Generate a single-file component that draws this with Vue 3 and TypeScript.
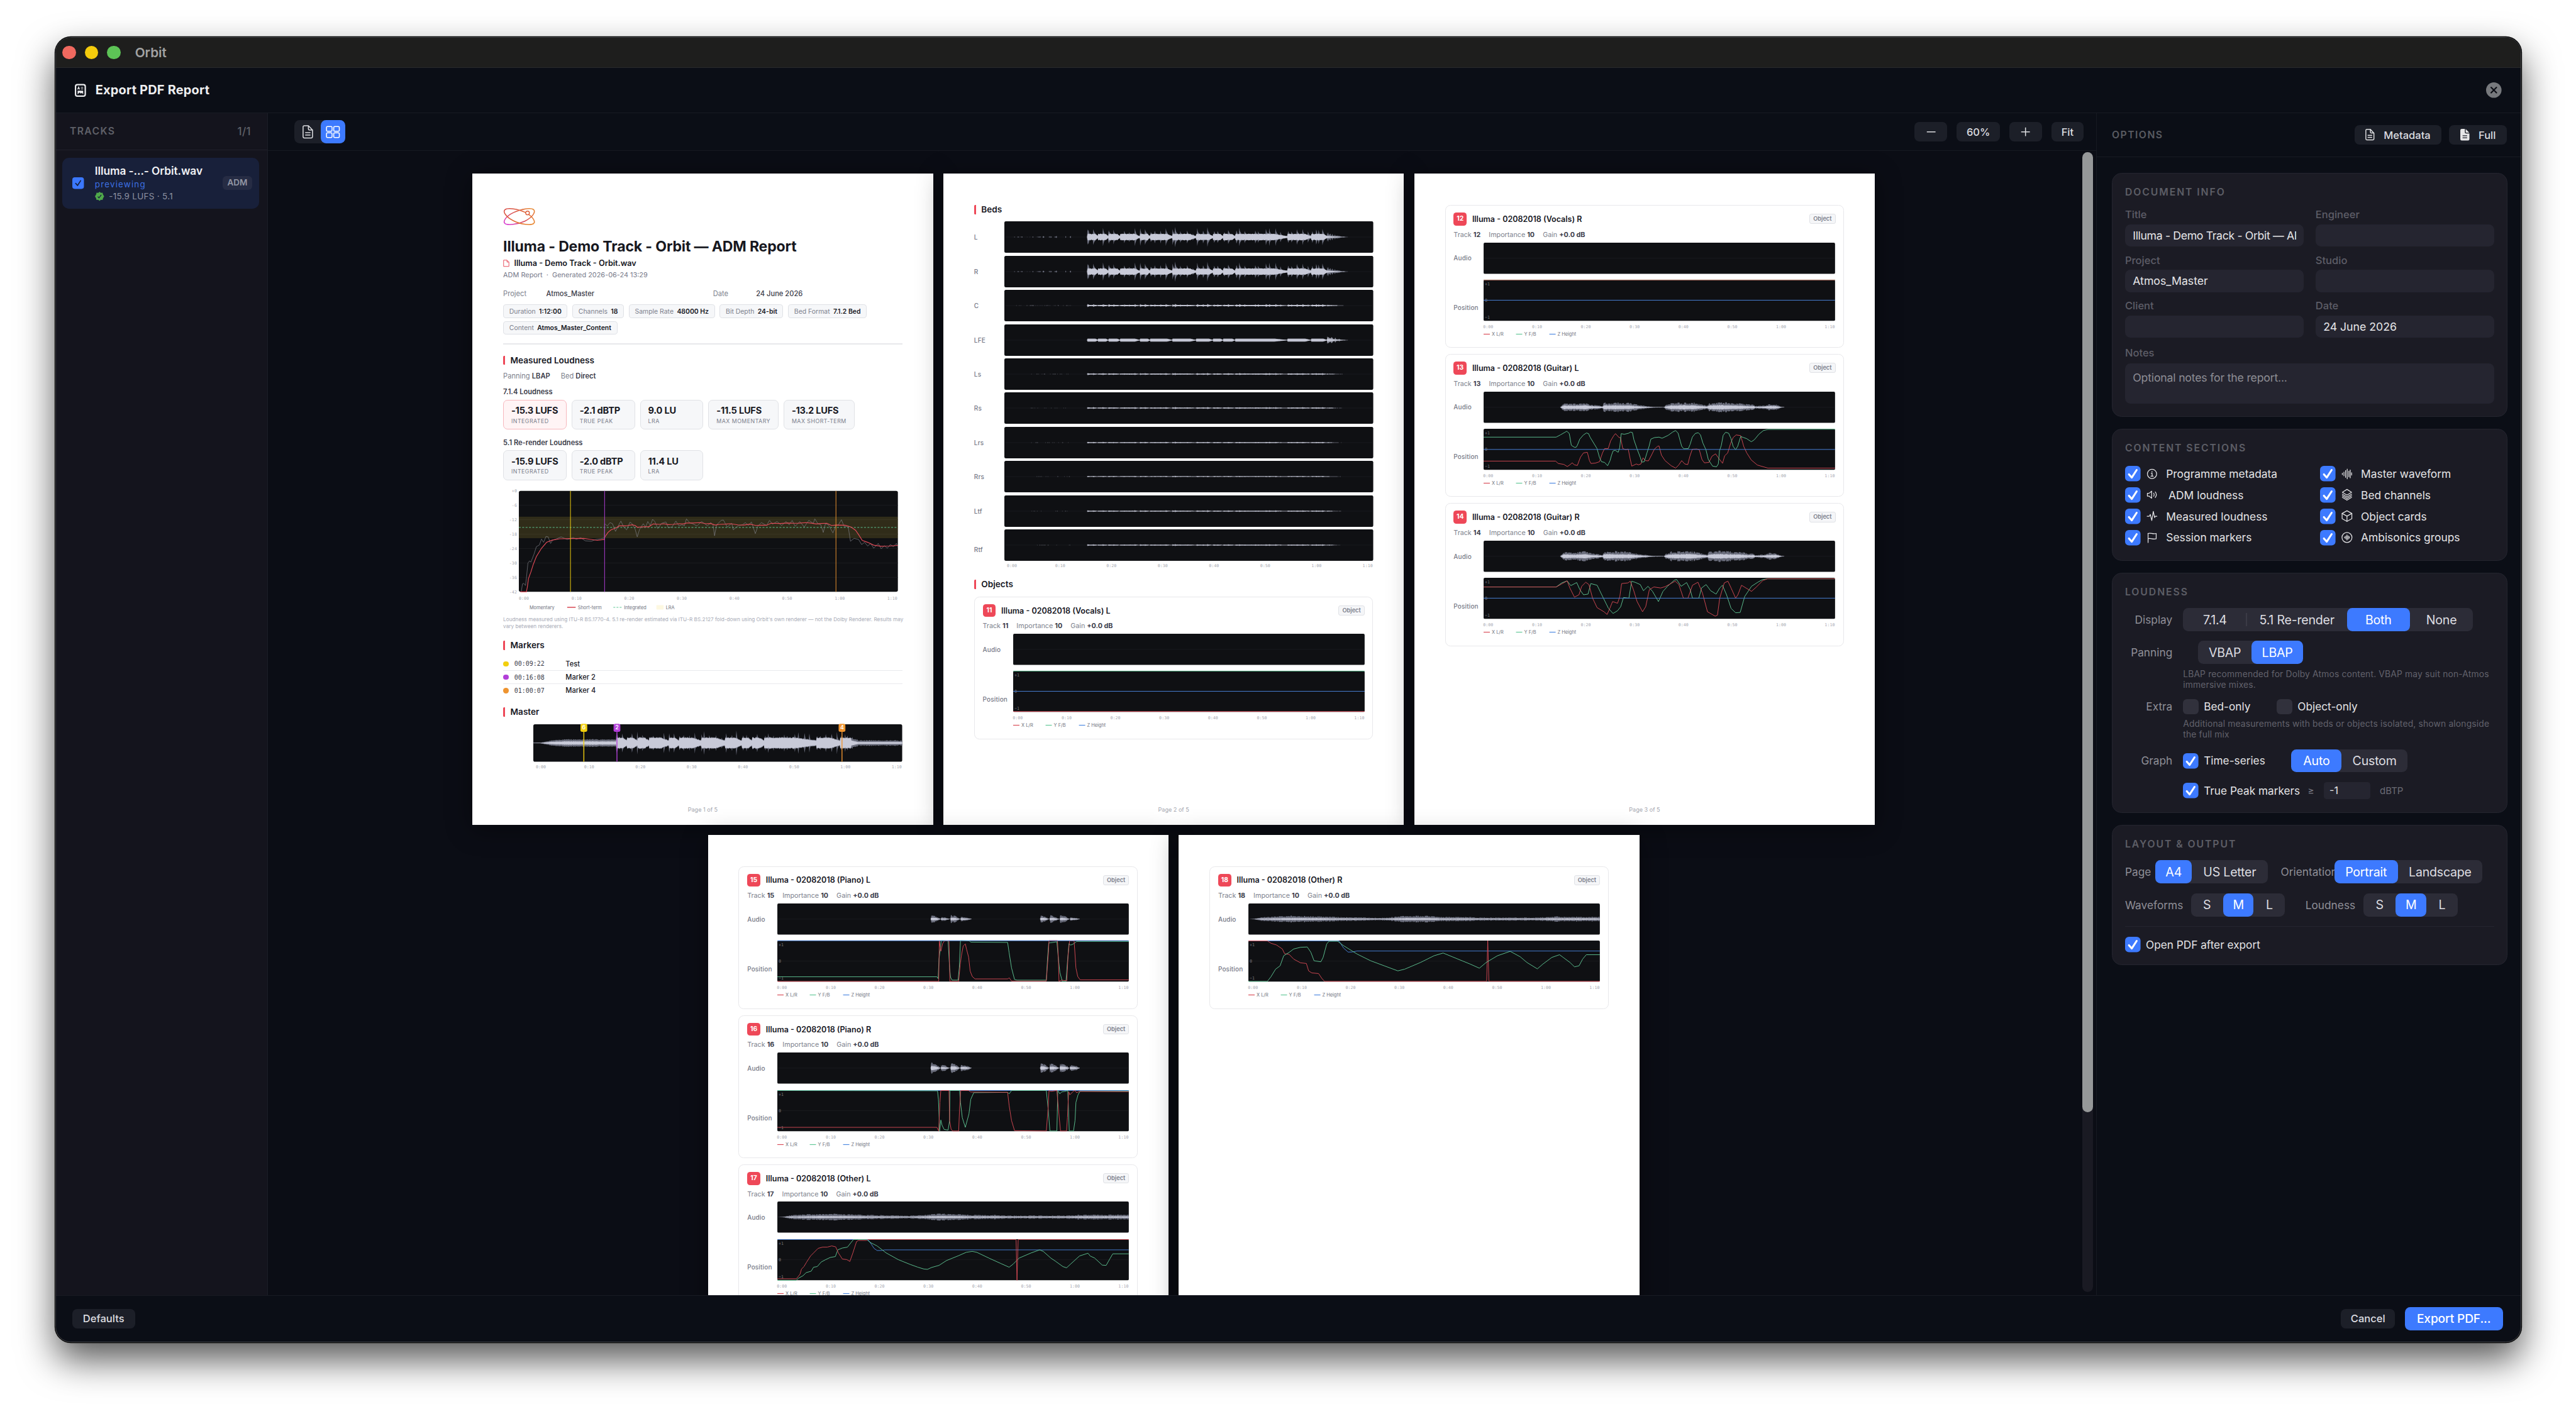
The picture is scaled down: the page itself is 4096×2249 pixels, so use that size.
<script setup lang="ts">
type Series = { color: string; points: string }
type ObjectCard = {
  id: number
  name: string
  wave: string
  grid: [number, number]
  series: Series[]
}

const RED = '#d84a55'
const GREEN = '#5fc795'
const BLUE = '#4a86e0'

/* ---------- icons (24 x 24 stroke paths) ---------- */
const icons: Record<string, string[]> = {
  info: ['M12 2a10 10 0 1 0 0 20a10 10 0 1 0 0-20z', 'M10.2 10.6h2.1v6.2', 'M9.6 16.9h5', 'M12 6.6v1.5'],
  speaker: ['M2 9v6h3.6l5.600 4.600V4.400L5.600 9z', 'M15.600 8.600c1.300 2 1.300 4.800 0 6.800', 'M19 6c2.800 3.600 2.800 8.400 0 12'],
  pulse: ['M1.500 12.500h4.500l2.300-4 3.200 13 3.300-19.500 2.800 13 1.600-2.500h3.300'],
  flag: ['M3.500 23V3.200', 'M3.500 3.400c5-2.400 10 2.400 17.500 0v11.400c-7.500 2.400-12.500-2.400-17.500 0'],
  wave: ['M2 10.500v3', 'M5.500 8v8', 'M9 4.500v15', 'M12.500 1.500v21', 'M16 6v12', 'M19 3.500v17', 'M22 9.500v5'],
  layers: ['M12 0.500l10 6.200-10 6.200-10-6.200z', 'M2 10.800l10 6.200 10-6.200', 'M2 14.200l10 6.200 10-6.200', 'M2 17.600l10 6.200 10-6.200'],
  cube: ['M12 0.500l10.500 5.800v11.400L12 23.500l-10.500-5.800V6.300z', 'M1.500 6.300L12 12l10.500-5.700', 'M12 12v11.500'],
  ambi: ['M12 1.200a10.800 10.800 0 1 0 0 21.600a10.800 10.800 0 1 0 0-21.600z', 'M7 10.800v2.400', 'M9.500 9v6', 'M12 6.500v11', 'M14.500 8.500v7', 'M17 10.500v3'],
}

const leftSections = [
  { icon: 'info', label: 'Programme metadata' },
  { icon: 'speaker', label: 'ADM loudness' },
  { icon: 'pulse', label: 'Measured loudness' },
  { icon: 'flag', label: 'Session markers' },
]
const rightSections = [
  { icon: 'wave', label: 'Master waveform' },
  { icon: 'layers', label: 'Bed channels' },
  { icon: 'cube', label: 'Object cards' },
  { icon: 'ambi', label: 'Ambisonics groups' },
]
const sectionColumns = [leftSections, rightSections]

/* ---------- waveform generation ---------- */
function rng(seed: number) {
  let s = seed
  return () => {
    s = (s * 1664525 + 1013904223) % 4294967296
    return s / 4294967296
  }
}

type Level = { peak: number; rms: number }

function mirror(values: number[], mid: number): string {
  let top = `M0 ${mid}`
  let bottom = ''
  values.forEach((v, i) => {
    top += `L${i} ${(mid - v).toFixed(1)}`
    bottom = `L${i} ${(mid + v).toFixed(1)}` + bottom
  })
  return top + bottom + 'Z'
}

function buildWave(width: number, height: number, level: (t: number, rand: () => number) => Level, seed = 7) {
  const rand = rng(seed)
  const peaks: number[] = []
  const rms: number[] = []
  for (let i = 0; i <= width; i++) {
    const l = level(i / width, rand)
    peaks.push((l.peak * height) / 2)
    rms.push((l.rms * height) / 2)
  }
  return { peak: mirror(peaks, height / 2), rms: mirror(rms, height / 2) }
}

function lerpTable(table: number[][], t: number): number {
  for (let i = 1; i < table.length; i++) {
    if (t <= table[i][0]) {
      const [x0, y0] = table[i - 1]
      const [x1, y1] = table[i]
      return y0 + ((y1 - y0) * (t - x0)) / (x1 - x0 || 1)
    }
  }
  return table[table.length - 1][1]
}

const hits = [
  275, 278, 293, 326, 343, 361, 395, 411, 431, 449, 464, 483, 496, 516, 533, 556, 564, 581, 603, 622, 637, 656, 671, 693,
  704, 726, 739, 766, 776, 794, 829, 839, 864, 876, 896, 913, 937, 949, 966, 986, 1003, 1017, 1031, 1039, 1051,
].map((h, i) => ({ at: h / 1220, amp: [0.54, 0.46, 0.68, 0.58, 0.72, 0.5][(i * 7) % 6] }))
const blocks = [275, 310, 344, 383, 448, 482, 556, 634, 690, 723, 763, 936, 1014, 1068].map((b) => b / 1220)

function hitLevel(t: number, decay: number): number {
  let v = 0
  for (const h of hits) {
    const d = t - h.at
    if (d >= 0) v = Math.max(v, h.amp * (0.5 * Math.exp(-d / 0.0018) + 0.5 * Math.exp(-d / decay)))
  }
  return v
}

function bedLevel(scale: number, solid: boolean) {
  return (t: number, rand: () => number): Level => {
    const r = rand()
    if (t < 275 / 1220) {
      const on = !solid && t > 0.02 && t < 0.18 && r > 0.72
      return { peak: on ? 0.05 * scale * (t > 0.07 ? 1.1 : 0.5) * (0.4 + rand()) : 0, rms: 0 }
    }
    if (t > 1068 / 1220) {
      const k = Math.max(0, 1 - (t - 1068 / 1220) / 0.065)
      return { peak: k * k * 0.24 * scale * (0.4 + r), rms: k * k * 0.07 * scale }
    }
    let i = 0
    while (i < blocks.length - 2 && t >= blocks[i + 1]) i++
    const pos = (t - blocks[i]) / (blocks[i + 1] - blocks[i])
    const edge = pos > 0.75 ? 1 - (pos - 0.75) / 0.28 : 1
    if (solid) return { peak: 0.1 * edge, rms: 0.075 * edge }
    const p = hitLevel(t, 0.014)
    return {
      peak: Math.max(0.06, Math.max(p * (0.35 + 0.65 * edge), 0.2 * edge) * (0.88 + 0.18 * r)) * scale,
      rms: (0.04 + 0.15 * edge * (0.85 + 0.3 * r)) * scale,
    }
  }
}

const axisInner = ['0:00', '0:10', '0:20', '0:30', '0:40', '0:50', '1:00', '1:10']
const axisWide = [15.5, 115.5, 221.5, 327.5, 433.5, 539.5, 645.5, 751.5]

const beds = [
  { label: 'L', scale: 1, solid: false },
  { label: 'R', scale: 1, solid: false },
  { label: 'C', scale: 0.19, solid: false },
  { label: 'LFE', scale: 1, solid: true },
  { label: 'Ls', scale: 0.13, solid: false },
  { label: 'Rs', scale: 0.12, solid: false },
  { label: 'Lrs', scale: 0.1, solid: false },
  { label: 'Rrs', scale: 0.08, solid: false },
  { label: 'Ltf', scale: 0.11, solid: false },
  { label: 'Rtf', scale: 0.11, solid: false },
].map((b, i) => ({ ...b, wave: buildWave(763, 65, bedLevel(b.scale, b.solid), 11 + (i === 1 ? 0 : i)) }))

const masterWave = buildWave(763, 77.5, (t, rand) => {
  const r = rand()
  if (t < 0.225) {
    const base = lerpTable([[0, 0.01], [0.02, 0.02], [0.05, 0.14], [0.085, 0.19], [0.23, 0.19]], t)
    return { peak: base * (0.85 + 0.25 * r), rms: base * 0.45 * (0.85 + 0.3 * r) }
  }
  if (t > 0.862) {
    const base = lerpTable([[0.862, 0.3], [0.88, 0.12], [0.9, 0.12], [1, 0.12]], t)
    return { peak: base * (0.8 + 0.6 * r), rms: base * 0.45 }
  }
  const p = hitLevel(t, 0.006) * 1.08
  let i = 0
  while (i < blocks.length - 2 && t >= blocks[i + 1]) i++
  const pos = (t - blocks[i]) / (blocks[i + 1] - blocks[i])
  const rms = pos > 0.6 ? 0.28 - (pos - 0.6) * 0.4 : 0.28
  return { peak: Math.max(p, rms + 0.03) * (0.85 + 0.22 * r), rms: rms * (0.9 + 0.15 * r) }
})

function tableWave(table: number[][], span: number, half: number, seed: number, ratio = 0.42) {
  let left = 0
  let factor = 1
  return buildWave(727, 64.5, (t, rand) => {
    const base = lerpTable(table, t * span) / half
    if (left <= 0) {
      left = 2 + Math.floor(rand() * 9)
      factor = 0.78 + rand() * 0.3
    }
    left--
    const notch = left === 0 ? 0.62 : 1
    return { peak: base * factor * notch * (0.93 + 0.12 * rand()), rms: base * ratio * (0.75 + 0.35 * rand()) }
  }, seed)
}

const guitarTable = [
  [0, 0], [252, 0], [254, 1], [265, 20], [300, 18], [340, 21], [350, 15], [394, 6], [397, 22], [480, 20], [500, 14], [530, 7],
  [560, 2], [597, 1], [602, 10], [620, 20], [690, 23], [715, 15], [740, 8], [745, 20], [775, 24], [850, 18], [880, 12],
  [894, 12], [897, 5], [930, 8], [940, 14], [965, 14], [985, 2], [993, 1], [995, 0], [1162, 0],
]
function burst(start: number, end: number, amp: number): number[][] {
  return [[start - 1, 0], [start, amp], [start + (end - start) * 0.5, amp * 0.75], [end, 1]]
}
const pianoL = [[0, 0], ...burst(509, 540, 14), ...burst(542, 570, 7), ...burst(574, 604, 14), ...burst(607, 642, 8), [643, 0], ...burst(871, 898, 13), ...burst(902, 932, 12), ...burst(936, 966, 13), ...burst(969, 1000, 6), [1001, 0], [1163, 0]]
const pianoR = [[0, 0], ...burst(509, 540, 20), ...burst(542, 570, 11), ...burst(574, 604, 19), ...burst(607, 642, 12), [643, 0], ...burst(871, 898, 19), ...burst(902, 932, 16), ...burst(936, 966, 18), ...burst(969, 1000, 11), [1001, 0], [1163, 0]]
const otherTable = [
  [0, 0], [20, 1], [40, 6], [100, 9], [150, 11], [250, 9], [300, 7], [400, 5], [430, 4], [480, 7], [520, 11], [590, 11],
  [640, 7], [720, 7], [760, 5], [900, 5], [960, 5], [1000, 8], [1163, 8],
]

const waves: Record<string, { peak: string; rms: string }> = {
  silent: { peak: '', rms: '' },
  guitarL: tableWave(guitarTable, 1162, 72, 3),
  guitarR: tableWave(guitarTable, 1162, 68, 5),
  pianoL: tableWave(pianoL, 1163, 52, 9, 0.35),
  pianoR: tableWave(pianoR, 1163, 52, 13, 0.35),
  otherL: tableWave(otherTable, 1163, 52, 17, 0.3),
  otherR: tableWave(otherTable, 1163, 52, 19, 0.3),
}

/* ---------- object cards ---------- */
const flat = (v: number) => `0,${v} 1162,${v}`
const cards: Record<number, ObjectCard> = {
  11: {
    id: 11, name: 'Illuma - 02082018 (Vocals) L', wave: 'silent', grid: [1162, 187],
    series: [{ color: RED, points: flat(185) }, { color: GREEN, points: flat(1) }, { color: BLUE, points: flat(93) }],
  },
  12: {
    id: 12, name: 'Illuma - 02082018 (Vocals) R', wave: 'silent', grid: [1162, 187],
    series: [{ color: GREEN, points: flat(1) }, { color: '#c9635c', points: flat(1) }, { color: BLUE, points: flat(93) }],
  },
  13: {
    id: 13, name: 'Illuma - 02082018 (Guitar) L', wave: 'guitarL', grid: [1162, 187],
    series: [
      { color: RED, points: '0,147 238,147 247,158 265,162 277,172 287,162 293,155 300,164 310,167 320,130 330,110 343,107 350,145 355,158 370,156 383,150 393,110 400,90 412,90 420,55 430,32 436,22 448,40 453,40 460,90 470,95 478,92 485,140 490,170 505,160 512,164 520,160 527,132 535,145 545,146 555,120 565,92 575,80 580,78 588,120 600,145 620,168 635,179 645,165 655,145 665,160 675,163 682,125 690,93 705,92 713,95 722,140 730,155 745,153 755,125 767,114 775,130 790,157 797,123 807,110 817,65 825,40 835,28 850,31 860,80 870,110 885,142 905,165 940,179 1162,179' },
      { color: GREEN, points: '0,38 240,38 255,27 270,15 275,11 283,21 285,35 290,75 300,84 306,84 310,75 318,47 330,28 340,19 347,22 352,38 375,90 383,130 390,150 400,153 410,168 418,145 423,120 428,101 435,98 445,107 450,85 455,22 465,25 480,20 485,15 492,17 497,50 507,90 518,130 523,152 531,150 540,110 547,80 553,47 565,40 580,38 590,43 610,30 625,15 635,8 643,20 650,55 655,80 662,91 677,90 683,70 690,38 700,21 710,18 717,28 725,65 735,95 743,140 757,170 770,173 776,160 780,100 786,75 792,30 800,16 810,20 818,45 825,80 833,95 840,80 850,35 860,40 870,45 885,59 895,50 910,25 925,8 940,3 1162,2' },
      { color: BLUE, points: flat(94) },
    ],
  },
  14: {
    id: 14, name: 'Illuma - 02082018 (Guitar) R', wave: 'guitarR', grid: [774, 121],
    series: [
      { color: GREEN, points: '0,27 160,27 172,15 184,9 192,23 205,14 212,35 220,50 230,48 236,17 250,22 262,55 275,90 285,105 295,97 302,85 308,58 320,60 326,10 335,14 345,20 352,38 362,25 372,40 385,70 395,40 405,25 420,7 425,5 435,25 447,14 455,35 460,60 474,60 480,30 490,20 500,38 512,48 520,30 526,22 535,50 545,90 555,103 565,102 575,55 590,25 605,12 615,5 625,3 774,3' },
      { color: RED, points: '0,27 160,27 172,18 184,9 190,30 200,57 210,50 216,25 225,13 232,20 240,60 250,88 265,100 272,108 278,90 284,70 295,75 300,55 304,17 318,15 323,10 330,35 338,70 350,100 357,85 365,35 375,27 390,30 400,26 422,10 430,20 440,60 450,60 460,22 472,13 482,45 493,100 510,113 515,110 520,60 530,15 538,10 545,30 555,60 560,50 568,22 590,40 600,28 615,8 625,3 774,3' },
      { color: BLUE, points: '0,60 774,60' },
    ],
  },
  15: {
    id: 15, name: 'Illuma - 02082018 (Piano) L', wave: 'pianoL', grid: [1163, 135],
    series: [
      { color: GREEN, points: '0,119 528,119 532,125 535,60 541,15 542,0 565,1 570,90 573,120 578,130 598,130 602,90 606,0 635,1 640,5 762,6 767,40 775,90 785,128 793,130 890,130 894,60 898,8 905,7 925,4 930,60 935,105 943,134 955,134 960,70 965,10 970,15 978,12 990,3 1163,3' },
      { color: RED, points: '0,134 534,134 536,0 541,35 547,10 553,1 568,1 571,134 600,134 605,80 609,50 615,18 622,11 626,28 633,55 638,100 645,118 654,126 763,126 767,122 775,133 890,133 897,40 899,0 927,0 930,60 932,134 940,130 958,132 962,50 967,1 982,1 988,90 994,118 1002,129 1163,129' },
      { color: BLUE, points: '0,0.5 1163,0.5' },
    ],
  },
  16: {
    id: 16, name: 'Illuma - 02082018 (Piano) R', wave: 'pianoR', grid: [1163, 135],
    series: [
      { color: BLUE, points: '0,1 1163,1' },
      { color: GREEN, points: '0,1 530,2 533,30 537,134 541,98 545,115 552,129 565,131 570,100 571,1 603,1 606,40 612,90 622,122 634,78 640,30 650,8 762,7 767,12 775,1 890,1 896,60 902,134 925,134 928,1 935,12 940,6 955,3 961,1 966,134 980,134 985,100 988,40 995,15 1002,3 1163,3' },
      { color: RED, points: '0,122 528,122 534,134 538,40 541,1 568,1 570,100 575,128 580,134 600,134 603,60 607,1 633,1 640,6 762,7 767,50 775,100 785,133 890,134 896,60 899,1 905,4 925,1 930,60 937,134 957,134 960,90 964,5 968,15 980,3 985,1 990,8 1000,4 1163,5' },
    ],
  },
  17: {
    id: 17, name: 'Illuma - 02082018 (Other) L', wave: 'otherL', grid: [1163, 135],
    series: [
      { color: BLUE, points: '0,1 300,1 310,15 320,30 330,37 345,37 355,35 1163,35' },
      { color: GREEN, points: '0,135 63,135 70,128 85,120 95,110 112,105 120,92 132,90 145,75 160,67 175,60 192,57 200,35 215,29 232,26 243,12 252,1 295,1 310,12 330,22 360,45 400,67 440,83 465,92 485,98 497,99 510,93 535,86 560,70 600,54 625,43 645,40 660,43 700,62 740,80 767,92 780,82 800,62 840,45 868,35 880,40 905,62 920,72 945,90 957,94 970,82 1000,55 1028,46 1035,55 1050,62 1075,85 1088,86 1100,65 1110,48 1163,48' },
      { color: RED, points: '0,130 63,130 75,115 80,98 88,90 97,75 110,55 120,45 135,30 150,26 165,26 180,22 193,25 202,45 215,65 230,67 240,73 250,45 262,8 268,4 295,4 300,1 790,1 793,135 797,1 1163,1' },
    ],
  },
  18: {
    id: 18, name: 'Illuma - 02082018 (Other) R', wave: 'otherR', grid: [776, 122],
    series: [
      { color: BLUE, points: '0,1 200,1 210,22 220,34 228,34 240,31 776,31' },
      { color: RED, points: '0,1 42,1 50,8 62,13 75,25 80,39 90,41 100,55 115,66 128,68 133,90 140,96 155,98 162,112 168,121 526,121 528.5,0 531,121 776,121' },
      { color: GREEN, points: '0,121 42,121 50,107 60,85 70,75 78,45 90,35 100,25 115,20 130,19 138,35 145,60 160,63 165,50 173,10 178,2 197,2 210,15 240,40 270,60 300,75 330,90 345,85 380,65 410,45 430,37 450,48 490,70 510,82 525,65 550,45 578,32 600,48 615,65 638,84 650,70 670,50 687,42 695,50 710,65 720,78 730,75 738,55 746,42 776,42' },
    ],
  },
}

const axisCard = [9.5, 110.5, 211.5, 312.4, 413.4, 514.4, 615.4, 716]
const legendCard = [
  { color: RED, x: 0, label: 'X L/R' },
  { color: GREEN, x: 67, label: 'Y F/B' },
  { color: BLUE, x: 136, label: 'Z Height' },
]

const pageRows = [
  [
    { n: 1, cards: [] as ObjectCard[] },
    { n: 2, cards: [cards[11]] },
    { n: 3, cards: [cards[12], cards[13], cards[14]] },
  ],
  [
    { n: 4, cards: [cards[15], cards[16], cards[17]] },
    { n: 5, cards: [cards[18]] },
  ],
]

/* ---------- first page data ---------- */
const chips = [
  ['Duration', '1:12:00'],
  ['Channels', '18'],
  ['Sample Rate', '48000 Hz'],
  ['Bit Depth', '24-bit'],
  ['Bed Format', '7.1.2 Bed'],
  ['Content', 'Atmos_Master_Content'],
]
const metricGroups = [
  {
    title: '7.1.4 Loudness',
    metrics: [
      ['-15.3 LUFS', 'INTEGRATED'],
      ['-2.1 dBTP', 'TRUE PEAK'],
      ['9.0 LU', 'LRA'],
      ['-11.5 LUFS', 'MAX MOMENTARY'],
      ['-13.2 LUFS', 'MAX SHORT-TERM'],
    ],
  },
  {
    title: '5.1 Re-render Loudness',
    metrics: [
      ['-15.9 LUFS', 'INTEGRATED'],
      ['-2.0 dBTP', 'TRUE PEAK'],
      ['11.4 LU', 'LRA'],
    ],
  },
]
const dbLabels = ['+0', '-6', '-12', '-18', '-24', '-30', '-36', '-42']
const momentary =
  '8,461 12,425 16,422 22,432 25,400 30,330 35,320 40,325 50,290 58,255 68,247 75,220 82,235 90,208 97,210 105,240 112,225 125,219 140,210 160,222 170,218 180,213 190,221 205,214 220,228 240,230 255,222 270,219 283,215 284,150 293,160 302,145 310,150 320,185 333,150 338,138 347,165 357,178 368,143 375,150 385,175 392,210 400,175 412,150 420,165 427,140 435,158 443,130 450,140 460,172 473,148 487,142 495,168 507,165 520,138 530,160 540,155 548,160 555,128 565,145 575,150 590,160 605,140 615,150 625,160 635,145 643,155 648,205 655,155 670,135 677,133 690,165 705,148 710,178 725,160 740,155 750,145 760,158 770,142 783,195 792,160 803,145 820,158 830,135 840,152 855,140 870,158 885,140 895,155 905,135 915,162 930,140 945,165 960,135 975,148 980,128 990,150 1000,155 1008,190 1015,150 1025,155 1040,192 1050,158 1058,155 1068,132 1078,165 1090,160 1098,230 1110,217 1125,222 1135,245 1145,235 1155,252 1165,240 1175,262 1190,240 1200,265 1210,250 1220,262 1230,245 1240,255 1250,240 1255,255'
const shortTerm =
  '5,461 25,461 28,440 32,400 40,370 48,335 58,300 75,262 92,235 110,225 135,219 170,218 215,217 235,221 260,226 280,222 283,222 285,210 295,190 305,178 320,170 333,160 345,160 355,160 375,155 385,158 392,166 415,164 430,164 445,151 465,153 480,150 495,154 510,153 530,150 545,151 555,147 575,147 600,145 620,150 635,149 650,156 665,153 685,152 700,150 725,155 745,156 765,152 785,158 800,157 820,157 835,148 865,149 890,147 910,148 925,148 950,145 965,147 985,151 1000,149 1020,148 1035,158 1050,156 1080,157 1100,165 1115,180 1125,200 1137,226 1155,235 1175,248 1200,253 1225,252 1255,249'
const markers = [
  { color: '#f2cf0e', time: '00:09:22', name: 'Test', badge: '6', x: 104.5, lx: 171 },
  { color: '#b23fd8', time: '00:16:08', name: 'Marker 2', badge: '2', x: 173, lx: 284 },
  { color: '#ee9430', time: '01:00:07', name: 'Marker 4', badge: '4', x: 638.5, lx: 1050 },
]

const displayOptions = ['7.1.4', '5.1 Re-render', 'Both', 'None']
const sizes = ['S', 'M', 'L']
</script>

<template>
  <div class="desktop">
    <div class="window">
      <header class="titlebar">
        <span class="light red"></span>
        <span class="light yellow"></span>
        <span class="light green"></span>
        <span class="app-name">Orbit</span>
      </header>

      <div class="dialog-head">
        <svg class="head-icon" viewBox="0 0 24 28">
          <rect x="1.500" y="1.500" width="21" height="25" rx="4" fill="none" stroke="#ececee" stroke-width="3" />
          <path d="M6 12l2.200-5.500L10.400 12M6.800 10.400h2.800M13 7.500h5M13 11h5" fill="none" stroke="#ececee" stroke-width="1.500" />
          <path d="M6 14.500h12v8l-3-3.500-2 2-2.500-2.500-4.500 4z" fill="#ececee" />
        </svg>
        <h1>Export PDF Report</h1>
        <svg class="close" viewBox="0 0 32 32">
          <circle cx="16" cy="16" r="16" fill="#77797d" />
          <path d="M10.500 10.500l11 11M21.500 10.500l-11 11" stroke="#0b0d14" stroke-width="2.800" stroke-linecap="round" />
        </svg>
      </div>

      <div class="body">
        <aside class="tracks">
          <div class="tracks-head"><span>TRACKS</span><span class="count">1/1</span></div>
          <div class="track">
            <svg class="track-check" viewBox="0 0 24 24">
              <rect width="24" height="24" rx="5" fill="#3b78ff" />
              <path d="M7 12.500l3.800 4.500L17.200 7" fill="none" stroke="#18203a" stroke-width="2.200" stroke-linecap="round" stroke-linejoin="round" />
            </svg>
            <div class="track-text">
              <div class="track-name">Illuma -...- Orbit.wav</div>
              <div class="track-state">previewing</div>
              <div class="track-level">
                <svg viewBox="0 0 24 24">
                  <path d="M12 0l3.400 3 4.500-.5 1 4.400L24 12l-3.100 5.100-1 4.400-4.500-.5L12 24l-3.400-3-4.500.5-1-4.400L0 12l3.100-5.100 1-4.400 4.500.5z" fill="#4fa94b" />
                  <path d="M7.500 12.500l3 3.600 6-8" fill="none" stroke="#18203a" stroke-width="2.200" />
                </svg>
                <span>-15.9 LUFS · 5.1</span>
              </div>
            </div>
            <span class="track-badge">ADM</span>
          </div>
        </aside>

        <main class="preview">
          <div class="toolbar">
            <div class="view-switch">
              <span class="view-btn">
                <svg viewBox="0 0 22 28" width="22" height="28">
                  <path d="M1.200 4a2.500 2.500 0 0 1 2.500-2.800h8.500l8.500 9V24a2.700 2.700 0 0 1-2.700 2.700H3.900A2.700 2.700 0 0 1 1.200 24zM12.200 1.500v6.500a2 2 0 0 0 2 2h6.500M5.500 15.500h11M5.500 20.500h11" fill="none" stroke="#dcdde0" stroke-width="2" />
                </svg>
              </span>
              <span class="view-btn active">
                <svg viewBox="0 0 30 26" width="30" height="26">
                  <g fill="none" stroke="#fff" stroke-width="2">
                    <rect x="1.500" y="1.500" width="11.500" height="10" rx="2" /><rect x="16.500" y="1.500" width="11.500" height="10" rx="2" />
                    <rect x="1.500" y="14.500" width="11.500" height="10" rx="2" /><rect x="16.500" y="14.500" width="11.500" height="10" rx="2" />
                  </g>
                </svg>
              </span>
            </div>
            <div class="zoom">
              <span class="btn zoom-step"><svg viewBox="0 0 20 20" width="20" height="20"><path d="M1 10h18" stroke="#dcdde0" stroke-width="2" /></svg></span>
              <span class="btn zoom-value">60%</span>
              <span class="btn zoom-step"><svg viewBox="0 0 20 20" width="20" height="20"><path d="M1 10h18M10 1v18" stroke="#dcdde0" stroke-width="2" /></svg></span>
              <span class="btn zoom-fit">Fit</span>
            </div>
          </div>

          <div class="canvas">
            <div class="sheets">
              <div v-for="(row, ri) in pageRows" :key="ri" class="sheet-row">
                <article v-for="page in row" :key="page.n" class="sheet" :class="{ first: page.n === 1 }">
                  <template v-if="page.n === 1">
                    <svg class="logo" viewBox="0 0 67 35">
                      <defs>
                        <linearGradient id="orbit-ring" x1="0" y1="1" x2="1" y2="0">
                          <stop offset="0" stop-color="#d93be0" /><stop offset="0.450" stop-color="#d84a55" /><stop offset="1" stop-color="#e88a2c" />
                        </linearGradient>
                        <linearGradient id="orbit-ring-b" x1="0" y1="0" x2="1" y2="1">
                          <stop offset="0" stop-color="#d84a45" /><stop offset="1" stop-color="#e8872c" />
                        </linearGradient>
                      </defs>
                      <path d="M4 32C-1 28 5 17 22 9C38 1 58-1 63 3C68 8 61 19 45 27C30 34 9 36 4 32z" fill="none" stroke="url(#orbit-ring)" stroke-width="2" />
                      <path d="M4 3C9-1 30 1 46 9C61 17 68 28 63 32C58 36 36 34 21 26C5 18-1 7 4 3z" fill="none" stroke="url(#orbit-ring-b)" stroke-width="2" />
                      <circle cx="50.500" cy="10" r="3.800" fill="#fff" stroke="#dc5a35" stroke-width="1.800" />
                    </svg>
                    <h2 class="doc-title">Illuma - Demo Track - Orbit — ADM Report</h2>
                    <div class="doc-file">
                      <svg viewBox="0 0 13 15" width="13" height="15"><path d="M1 1h7l4 4v9H1zM8 1v4h4" fill="none" stroke="#e8505f" stroke-width="1.300" /></svg>
                      <span>Illuma - Demo Track - Orbit.wav</span>
                    </div>
                    <div class="doc-sub">ADM Report &nbsp;·&nbsp; Generated 2026-06-24 13:29</div>
                    <div class="props">
                      <span class="k">Project</span><span class="v wide">Atmos_Master</span><span class="k">Date</span><span class="v">24 June 2026</span>
                    </div>
                    <div class="chips">
                      <span v-for="c in chips" :key="c[0]" class="chip">{{ c[0] }} <b>{{ c[1] }}</b></span>
                    </div>
                    <hr class="rule" />
                    <h3 class="section">Measured Loudness</h3>
                    <div class="pan-line"><span>Panning <b>LBAP</b></span><span>Bed <b>Direct</b></span></div>
                    <div v-for="(g, gi) in metricGroups" :key="g.title" class="metric-group">
                      <h4>{{ g.title }}</h4>
                      <div class="metrics">
                        <div v-for="(m, mi) in g.metrics" :key="m[1]" class="metric" :class="{ hot: gi === 0 && mi === 0 }">
                          <strong>{{ m[0] }}</strong><small>{{ m[1] }}</small>
                        </div>
                      </div>
                    </div>
                    <svg class="loudness" viewBox="0 0 826 260">
                      <text v-for="(l, i) in dbLabels" :key="l" class="tick" x="28.500" :y="13.5 + i * 29.85" text-anchor="end">{{ l }}</text>
                      <svg x="32.500" y="10" width="784" height="209" viewBox="0 0 1255 461" preserveAspectRatio="none">
                        <rect width="1255" height="461" rx="6" ry="8" fill="#0f1013" />
                        <path v-for="i in 6" :key="i" :d="`M0 ${i * 65.86}H1255`" stroke="#202226" class="thin" />
                        <rect y="118" width="1255" height="98" fill="rgba(242, 207, 60, 0.150)" />
                        <path d="M0 167H1255" stroke="#5fc795" stroke-dasharray="4 3" class="line" />
                        <polyline :points="momentary" stroke="#7e8087" class="thin" />
                        <polyline :points="shortTerm" stroke="#e04a57" class="thick" />
                        <path v-for="m in markers" :key="m.badge" :d="`M${m.lx} 0V461`" :stroke="m.color" opacity="0.850" class="thick" />
                      </svg>
                      <text v-for="(l, i) in axisInner" :key="l" class="tick" :x="43 + i * 108.86" y="235" text-anchor="middle">{{ l }}</text>
                      <g class="legend">
                        <text x="54.500" y="254.500">Momentary</text>
                        <path d="M132.500 251h17.500" stroke="#d84a55" stroke-width="2" /><text x="154.500" y="254.500">Short-term</text>
                        <path d="M228 251h18" stroke="#5fc795" stroke-width="1.500" stroke-dasharray="4 2.500" /><text x="250" y="254.500">Integrated</text>
                        <rect x="317" y="246.500" width="15" height="9" rx="1" fill="#fdf8e1" /><text x="336.500" y="254.500">LRA</text>
                      </g>
                    </svg>
                    <p class="note">Loudness measured using ITU-R BS.1770-4. 5.1 re-render estimated via ITU-R BS.2127 fold-down using Orbit's own renderer — not the Dolby Renderer. Results may<br />vary between renderers.</p>
                    <h3 class="section markers-title">Markers</h3>
                    <ul class="markers">
                      <li v-for="m in markers" :key="m.time">
                        <i :style="{ background: m.color }"></i><code>{{ m.time }}</code><span>{{ m.name }}</span>
                      </li>
                    </ul>
                    <h3 class="section master-title">Master</h3>
                    <svg class="master" viewBox="0 0 763 96">
                      <rect width="763" height="77.500" rx="3.500" fill="#0f1013" />
                      <path :d="masterWave.peak" fill="#6c6f7e" /><path :d="masterWave.rms" fill="#c8cad8" />
                      <g v-for="m in markers" :key="m.badge">
                        <path :d="`M${m.x} 0V77.5`" :stroke="m.color" stroke-width="1.800" />
                        <rect :x="m.x - 7" y="-1" width="14" height="16.500" rx="3.500" :fill="m.color" />
                        <text :x="m.x" y="11" class="flag-text" text-anchor="middle">{{ m.badge }}</text>
                      </g>
                      <text v-for="(l, i) in axisInner" :key="l" class="tick" :x="axisWide[i]" y="91.500" text-anchor="middle">{{ l }}</text>
                    </svg>
                  </template>

                  <template v-if="page.n === 2">
                    <h3 class="section beds-title">Beds</h3>
                    <div class="beds">
                      <div v-for="(b, i) in beds" :key="b.label" class="lane">
                        <span class="lane-label">{{ b.label }}</span>
                        <svg :viewBox="i === 9 ? '0 0 763 83' : '0 0 763 65'" :class="{ tall: i === 9 }">
                          <rect width="763" height="65" rx="3" fill="#0f1013" />
                          <path d="M2 32.500H761" stroke="#1a1b1f" stroke-width="1.200" />
                          <path :d="b.wave.peak" :fill="i < 2 ? '#6c6f7e' : '#9799a6'" /><path :d="b.wave.rms" fill="#c8cad8" />
                          <template v-if="i === 9">
                            <text v-for="(l, a) in axisInner" :key="l" class="tick" :x="axisWide[a]" y="78" text-anchor="middle">{{ l }}</text>
                          </template>
                        </svg>
                      </div>
                    </div>
                    <h3 class="section objects-title">Objects</h3>
                  </template>

                  <section v-for="c in page.cards" :key="c.id" class="object">
                    <div class="object-head"><i>{{ c.id }}</i><strong>{{ c.name }}</strong><em>Object</em></div>
                    <div class="object-meta"><span>Track <b>{{ c.id }}</b></span><span>Importance <b>10</b></span><span>Gain <b>+0.0 dB</b></span></div>
                    <div class="object-lane audio">
                      <span class="lane-label">Audio</span>
                      <svg viewBox="0 0 727 64.500" width="727" height="64.500">
                        <rect width="727" height="64.500" rx="2.500" fill="#0f1013" />
                        <path d="M1 32.250H726" stroke="#1a1b1f" stroke-width="1.200" />
                        <path :d="waves[c.wave].peak" fill="#6c6f7e" /><path :d="waves[c.wave].rms" fill="#c8cad8" />
                      </svg>
                    </div>
                    <div class="object-lane position">
                      <span class="lane-label">Position</span>
                      <svg viewBox="0 0 727 116" width="727" height="116">
                        <rect width="727" height="85" rx="2.500" fill="#0f1013" />
                        <path d="M1 42.500H726" stroke="#1f2024" stroke-width="1" />
                        <text class="tick dim" x="2.500" y="11.500">+1</text><text class="tick dim" x="2.500" y="46">0</text><text class="tick dim" x="2.500" y="80.500">−1</text>
                        <svg width="727" height="85" :viewBox="`0 0 ${c.grid[0]} ${c.grid[1]}`" preserveAspectRatio="none">
                          <polyline v-for="(s, si) in c.series" :key="si" :points="s.points" :stroke="s.color" class="line" />
                        </svg>
                        <text v-for="(l, i) in axisInner" :key="l" class="tick" :x="axisCard[i]" y="100.500" text-anchor="middle">{{ l }}</text>
                        <g v-for="g in legendCard" :key="g.label" class="legend">
                          <path :d="`M${g.x} 112.5h13`" :stroke="g.color" stroke-width="1.500" /><text :x="g.x + 17" y="116">{{ g.label }}</text>
                        </g>
                      </svg>
                    </div>
                  </section>

                  <footer class="page-no">Page {{ page.n }} of 5</footer>
                </article>
              </div>
            </div>
            <div class="scrollbar"><span class="thumb"></span></div>
          </div>
        </main>

        <aside class="options">
          <div class="options-head">
            <span class="caps">OPTIONS</span>
            <span class="btn doc-btn meta-btn">
              <svg viewBox="0 0 22 28" width="19" height="24"><path d="M1.200 4a2.500 2.500 0 0 1 2.500-2.800h8.500l8.500 9V24a2.700 2.700 0 0 1-2.700 2.700H3.900A2.700 2.700 0 0 1 1.200 24zM12.200 1.500v6.500a2 2 0 0 0 2 2h6.500M5.500 15.500h11M5.500 20.500h11" fill="none" stroke="#e0e0e2" stroke-width="2.200" /></svg>
              Metadata
            </span>
            <span class="btn doc-btn full-btn">
              <svg viewBox="0 0 22 28" width="19" height="24">
                <path d="M0 3.500A3.500 3.500 0 0 1 3.500 0H11v8.500a2.500 2.500 0 0 0 2.500 2.500H22v13.500a3.500 3.500 0 0 1-3.500 3.500h-15A3.500 3.500 0 0 1 0 24.500zM13 .4L21.600 9H14.500A1.500 1.500 0 0 1 13 7.500z" fill="#e6e6e8" />
                <path d="M5.500 16.500h11M5.500 21.500h11" stroke="#1c1f28" stroke-width="2" />
              </svg>
              Full
            </span>
          </div>

          <div class="panels">
            <section class="panel info-panel">
              <h5 class="caps">DOCUMENT INFO</h5>
              <div class="fields">
                <label>Title<span class="input"><span class="clip">Illuma - Demo Track - Orbit — ADM Report</span></span></label>
                <label>Engineer<span class="input"></span></label>
                <label>Project<span class="input">Atmos_Master</span></label>
                <label>Studio<span class="input"></span></label>
                <label>Client<span class="input"></span></label>
                <label>Date<span class="input">24 June 2026</span></label>
                <label class="notes">Notes<span class="input area">Optional notes for the report...</span></label>
              </div>
            </section>

            <section class="panel content-panel">
              <h5 class="caps">CONTENT SECTIONS</h5>
              <div class="section-cols">
                <div v-for="(col, ci) in sectionColumns" :key="ci" class="section-col">
                  <div v-for="s in col" :key="s.label" class="check-row">
                    <svg class="check" viewBox="0 0 32 32"><rect width="32" height="32" rx="8" fill="#3d7aff" /><path d="M8 17.500l5.800 6.700L24 8.500" /></svg>
                    <svg class="glyph" viewBox="0 0 24 24"><path v-for="d in icons[s.icon]" :key="d" :d="d" /></svg>
                    <span :class="{ nudged: s.icon === 'speaker' }">{{ s.label }}</span>
                  </div>
                </div>
              </div>
            </section>

            <section class="panel loud-panel">
              <h5 class="caps">LOUDNESS</h5>
              <div class="row first-row">
                <span class="name">Display</span>
                <div class="seg display-seg"><span v-for="o in displayOptions" :key="o" :class="{ on: o === 'Both' }">{{ o }}</span></div>
              </div>
              <div class="row pan-row">
                <span class="name">Panning</span>
                <div class="seg pan-seg"><span>VBAP</span><span class="on">LBAP</span></div>
              </div>
              <p class="hint">LBAP recommended for Dolby Atmos content. VBAP may suit non-Atmos<br />immersive mixes.</p>
              <div class="row extra-row">
                <span class="name">Extra</span>
                <span class="check off"></span><span class="lbl bed-lbl">Bed-only</span>
                <span class="check off"></span><span class="lbl">Object-only</span>
              </div>
              <p class="hint second">Additional measurements with beds or objects isolated, shown alongside<br />the full mix</p>
              <div class="row graph-row">
                <span class="name">Graph</span>
                <svg class="check" viewBox="0 0 32 32"><rect width="32" height="32" rx="8" fill="#3d7aff" /><path d="M8 17.500l5.800 6.700L24 8.500" /></svg>
                <span class="lbl time-lbl">Time-series</span>
                <div class="seg auto-seg"><span class="on">Auto</span><span>Custom</span></div>
              </div>
              <div class="row peak-row">
                <span class="name"></span>
                <svg class="check" viewBox="0 0 32 32"><rect width="32" height="32" rx="8" fill="#3d7aff" /><path d="M8 17.500l5.800 6.700L24 8.500" /></svg>
                <span class="lbl peak-lbl">True Peak markers</span>
                <span class="ge">≥</span><span class="input small">-1</span><span class="unit">dBTP</span>
              </div>
            </section>

            <section class="panel layout-panel">
              <h5 class="caps">LAYOUT &amp; OUTPUT</h5>
              <div class="row first-row">
                <span class="name page-name">Page</span>
                <div class="seg page-seg"><span class="on">A4</span><span>US Letter</span></div>
                <span class="name orient-name">Orientation</span>
                <div class="seg orient-seg"><span class="on">Portrait</span><span>Landscape</span></div>
              </div>
              <div class="row size-row">
                <span class="name wave-name">Waveforms</span>
                <div class="seg size-seg"><span v-for="s in sizes" :key="s" :class="{ on: s === 'M' }">{{ s }}</span></div>
                <span class="name loud-name">Loudness</span>
                <div class="seg size-seg"><span v-for="s in sizes" :key="s" :class="{ on: s === 'M' }">{{ s }}</span></div>
              </div>
              <hr />
              <div class="open-row">
                <svg class="check" viewBox="0 0 32 32"><rect width="32" height="32" rx="8" fill="#3d7aff" /><path d="M8 17.500l5.800 6.700L24 8.500" /></svg>
                <span class="lbl">Open PDF after export</span>
              </div>
            </section>
          </div>
        </aside>
      </div>

      <footer class="actions">
        <span class="btn defaults">Defaults</span>
        <span class="btn cancel">Cancel</span>
        <span class="btn export">Export PDF...</span>
      </footer>
    </div>
  </div>
</template>

<style>
body {
  background: #fff;
  overflow: hidden;
}
</style>

<style scoped>
* {
  box-sizing: border-box;
}
.desktop {
  zoom: 0.76877;
  width: 5328px;
  height: 2926px;
  padding: 77px 113px 0 114px;
  overflow: hidden;
  background: #fff;
  font-family: Inter, 'Liberation Sans', sans-serif;
  color: #e4e4e6;
}
h1, h2, h3, h4, h5, p, ul { margin: 0; padding: 0; }
svg { display: block; flex: none; overflow: visible; }
.window {
  width: 5101px;
  height: 2700px;
  display: flex;
  flex-direction: column;
  border-radius: 32px;
  background: #0b0e16;
  overflow: hidden;
  border: 2px solid #45464a;
  box-shadow: 0 0 0 1.500px #000, 0 36px 76px rgba(0, 0, 0, 0.660);
}
.titlebar {
  height: 62px;
  flex: none;
  display: flex;
  align-items: center;
  padding-left: 14px;
  background: #1e1e1d;
  border-bottom: 2px solid #292a2b;
}
.light { width: 28px; height: 28px; border-radius: 50%; margin-right: 18px; }
.light.red { background: #f1695f; }
.light.yellow { background: #f4cb0c; }
.light.green { background: #5dc456; }
.app-name { margin-left: 12px; font-size: 27px; font-weight: 600; color: #a2a2a2; }
.dialog-head {
  height: 94px;
  flex: none;
  display: flex;
  align-items: center;
  padding: 0 40px 0 39px;
  border-bottom: 2px solid #181b23;
}
.head-icon { width: 23px; height: 28px; }
.dialog-head h1 { margin-left: 20px; flex: 1; font-size: 26px; font-weight: 700; letter-spacing: 0.250px; color: #eeeef0; }
.close { width: 32px; height: 32px; }
.body { flex: 1; min-height: 0; display: flex; }

/* tracks */
.tracks { width: 439px; flex: none; background: #14141d; border-right: 2px solid #1b1d26; }
.tracks-head {
  height: 76px;
  display: flex;
  align-items: center;
  justify-content: space-between;
  padding: 0 34px 0 29px;
  border-bottom: 2px solid #20212b;
  font-size: 20.500px;
  font-weight: 600;
  letter-spacing: 1.800px;
  color: #5f6068;
}
.count { font-weight: 500; font-size: 22px; letter-spacing: 0.500px; }
.track {
  margin: 16px 17px 0 13px;
  height: 105px;
  padding: 0 15px 0 21px;
  display: flex;
  align-items: center;
  border-radius: 14px;
  background: #18203a;
}
.track-check { width: 24px; height: 24px; margin-right: 23px; }
.track-text { flex: 1; }
.track-name { font-size: 22.500px; line-height: 30px; font-weight: 600; color: #f1f2f5; letter-spacing: -0.100px; white-space: nowrap; margin-top: -1px; }
.track-state { font-size: 17.500px; line-height: 24px; color: #3d70e2; letter-spacing: 1.500px; margin-top: 1px; }
.track-level { display: flex; align-items: center; gap: 10px; font-size: 17.500px; line-height: 24px; color: #8f93a2; letter-spacing: 0.400px; white-space: nowrap; }
.track-level svg { width: 19px; height: 19px; }
.track-badge { width: 60px; height: 28px; line-height: 28px; text-align: center; border-radius: 8px; background: #262c44; color: #9497a5; font-size: 17.500px; font-weight: 600; }

/* preview */
.preview { flex: 1; min-width: 0; display: flex; flex-direction: column; }
.toolbar {
  height: 78px;
  flex: none;
  display: flex;
  align-items: center;
  justify-content: space-between;
  padding: 0 26px 0 55px;
  border-bottom: 2px solid #161921;
}
.view-switch { display: flex; width: 105px; height: 48px; border-radius: 11px; background: #1c1f28; }
.view-btn { width: 54px; display: flex; align-items: center; justify-content: center; }
.view-btn.active { width: 51px; border-radius: 11px; background: #3d7aff; }
.btn {
  height: 40px;
  flex: none;
  display: flex;
  align-items: center;
  justify-content: center;
  border-radius: 10px;
  background: #1c1f28;
  color: #dcdde0;
  font-size: 21.500px;
  font-weight: 500;
}
.zoom { display: flex; gap: 19px; }
.zoom-step { width: 68px; }
.zoom-value { width: 90px; }
.zoom-fit { width: 67px; }
.canvas { flex: 1; min-height: 0; display: flex; overflow: hidden; background: #0b0d15; }
.sheets { flex: 1; min-width: 0; padding: 47px 6px 0 0; }
.sheet-row { display: flex; justify-content: center; gap: 21.500px; height: 1347px; margin-bottom: 21px; }
.scrollbar { width: 22px; margin: 3px 7px 6px 0; border-radius: 11px; background: #1a1a23; }
.thumb { display: block; height: 1986px; border-radius: 11px; background: #969899; }

.sheet {
  width: 952.500px;
  height: 1347px;
  flex: none;
  padding: 65px 63.500px 0;
  display: flex;
  flex-direction: column;
  background: #fff;
  color: #17181f;
  box-shadow: 0 8px 50px rgba(0, 0, 0, 0.420);
}
.sheet.first { padding-top: 71px; }
.page-no { margin: auto 0 21px; height: 20px; line-height: 20px; font-size: 11.800px; text-align: center; color: #a3a5ae; }
.logo { width: 67px; height: 35px; }
.doc-title { margin-top: 24px; height: 43px; line-height: 43px; font-size: 30px; font-weight: 700; letter-spacing: -0.200px; white-space: nowrap; }
.doc-file { height: 24px; display: flex; align-items: center; gap: 9.500px; font-size: 16.500px; font-weight: 600; }
.doc-sub { height: 26px; line-height: 26px; font-size: 14.200px; color: #767989; }
.props { margin-top: 13px; height: 24px; line-height: 24px; display: flex; font-size: 14.500px; }
.props .k { width: 89px; color: #7c7f8c; }
.props .v { color: #3b3c49; font-weight: 500; }
.props .wide { width: 345px; }
.chips { margin-top: 11px; display: flex; flex-wrap: wrap; gap: 7.500px 10px; }
.chip {
  height: 27.500px;
  padding: 0 11.300px;
  display: flex;
  align-items: center;
  gap: 7px;
  border: 1.300px solid #dfe1e6;
  border-radius: 6px;
  background: #f6f7f9;
  font-size: 13.600px;
  color: #7c7f8c;
}
.chip b { color: #17181f; font-weight: 600; }
.rule { width: 100%; height: 2px; margin: 18px 0 23px; border: 0; background: #e7e8eb; }
.section {
  height: 19px;
  line-height: 20px;
  padding-left: 11px;
  border-left: 5px solid #ee4858;
  border-radius: 2px;
  font-size: 17.700px;
  font-weight: 600;
  flex: none;
}
.pan-line { margin-top: 13px; height: 21px; line-height: 21px; display: flex; gap: 22px; font-size: 14.500px; color: #7c7f8c; }
.pan-line b { color: #3b3c49; font-weight: 600; }
.metric-group { margin-top: 12px; }
.metric-group + .metric-group { margin-top: 16.500px; }
.metric-group h4 { height: 21px; line-height: 21px; font-size: 14.500px; font-weight: 600; color: #3b3c49; }
.metrics { margin-top: 5.300px; display: flex; gap: 10.500px; }
.metric {
  height: 62px;
  min-width: 131px;
  padding: 11px 15.500px 0;
  border: 1.300px solid #e0e2e6;
  border-radius: 9px;
  background: #f6f7f9;
}
.metric.hot { background: #fff4f5; border-color: #f7b7bd; }
.metric strong { display: block; height: 23px; line-height: 23px; font-size: 19px; font-weight: 700; letter-spacing: -0.300px; }
.metric small { display: block; height: 17px; line-height: 17px; font-size: 11.500px; letter-spacing: 0.600px; color: #7c7f8c; white-space: nowrap; }
.loudness { width: 826px; height: 260px; margin-top: 11.500px; }
.tick { font-family: 'DejaVu Sans Mono', 'Liberation Mono', monospace; font-size: 8.700px; fill: #a6a8b1; }
.tick.dim { fill: #77797f; }
.legend text { font-size: 9.600px; fill: #6d707c; }
.thin, .line, .thick { fill: none; vector-effect: non-scaling-stroke; stroke-width: 0.900px; }
.line { stroke-width: 1.200px; }
.thick { stroke-width: 1.500px; }
.note { margin-top: 9.500px; line-height: 15px; font-size: 10.700px; color: #a9acb7; white-space: nowrap; }
.markers-title { margin-top: 21.500px; }
.markers { margin-top: 15.500px; list-style: none; }
.markers li { height: 27.500px; display: flex; align-items: center; border-bottom: 1.300px solid #e9eaed; font-size: 14.500px; font-weight: 500; }
.markers li:last-child { border-bottom-color: transparent; }
.markers i { width: 11px; height: 11px; border-radius: 50%; margin-right: 12px; }
.markers code { width: 106px; font-family: 'DejaVu Sans Mono', monospace; font-size: 13px; color: #3b3c49; }
.master-title { margin-top: 21px; }
.master { width: 763px; height: 96px; margin: 16px 0 0 62.500px; }
.flag-text { font-size: 11.500px; font-weight: 600; fill: #fff; }
.beds { margin-top: 15px; display: flex; flex-direction: column; gap: 5.800px; }
.lane { display: flex; align-items: center; }
.lane svg { width: 763px; height: 65px; }
.lane svg.tall { height: 83px; }
.lane-label { width: 62.500px; flex: none; font-size: 13px; font-weight: 500; color: #777a87; letter-spacing: 0.200px; }
.objects-title { margin: 21px 0 16px; }

.object {
  height: 295.500px;
  flex: none;
  margin-bottom: 13px;
  padding: 14px 16.500px 0;
  border: 1.300px solid #e8e8eb;
  border-radius: 11px;
}
.object-head { height: 27px; display: flex; align-items: center; }
.object-head i { width: 27px; height: 27px; line-height: 27px; border-radius: 6px; background: #ee4858; color: #fff; font-size: 13.500px; font-weight: 700; font-style: normal; text-align: center; }
.object-head strong { flex: 1; margin-left: 11.500px; font-size: 16.300px; font-weight: 600; }
.object-head em { width: 54px; height: 21px; line-height: 18.500px; text-align: center; border: 1.300px solid #e0e2e6; border-radius: 4px; background: #f5f6f8; font-style: normal; font-size: 12px; font-weight: 600; color: #7c7f8c; }
.object-meta { margin-top: 9px; height: 20px; line-height: 20px; display: flex; gap: 17px; font-size: 14px; color: #7c7f8c; }
.object-meta b { color: #3b3c49; font-weight: 700; }
.object-lane { display: flex; align-items: center; }
.object-lane.audio { margin-top: 6px; }
.object-lane.position { margin-top: 12.500px; }

/* options */
.options { width: 878px; flex: none; border-left: 2px solid #171a22; display: flex; flex-direction: column; }
.options-head { height: 91px; display: flex; align-items: center; padding: 0 29px 0 31px; border-bottom: 2px solid #171a22; }
.caps { font-size: 20.500px; font-weight: 600; letter-spacing: 2.500px; color: #5d5e66; }
.options-head .caps { flex: 1; color: #595b61; letter-spacing: 1.900px; }
.meta-btn { width: 180px; margin-right: 16px; gap: 19px; }
.full-btn { width: 119px; gap: 19px; }
.panels { padding: 32px 27px 0 31px; display: flex; flex-direction: column; gap: 24.500px; }
.panel { border: 2px solid #24252f; border-radius: 20px; background: #1b1b24; padding: 24px 26px 0; }
.panel h5 { height: 32px; line-height: 32px; }
.info-panel { height: 505px; }
.fields { display: grid; grid-template-columns: 370px 370px; column-gap: 24px; margin-top: 14px; }
.fields label { height: 94px; line-height: 32px; font-size: 21.500px; font-weight: 500; color: #5d5d67; white-space: nowrap; }
.fields .notes { grid-column: 1 / 3; margin-top: 4px; }
.input { display: block; height: 46px; line-height: 46px; margin-top: 4px; padding: 0 12px 0 16px; border-radius: 11px; background: #252530; color: #e6e6e8; font-size: 23px; font-weight: 400; }
.clip { display: block; overflow: hidden; letter-spacing: -0.450px; margin-right: 4px; }
.input.area { height: 84px; line-height: 60px; margin-top: 5px; color: #8d8d94; letter-spacing: -0.250px; }
.content-panel { height: 273.500px; }
.section-cols { display: grid; grid-template-columns: 403px 1fr; margin-top: 14px; }
.check-row { height: 44px; display: flex; align-items: center; font-size: 22.600px; white-space: nowrap; }
.check { width: 32px; height: 32px; flex: none; }
.check path { fill: none; stroke: #fff; stroke-width: 4; stroke-linecap: round; stroke-linejoin: round; }
.check.off { border-radius: 8px; background: #31313c; }
.glyph { width: 23px; height: 23px; margin: 0 18px 0 12px; }
.glyph path { fill: none; stroke: #e4e4e6; stroke-width: 1.700; stroke-linejoin: round; stroke-linecap: round; }
.nudged { margin-left: 5px; }
.loud-panel { height: 497.500px; }
.row { display: flex; align-items: center; height: 48px; }
.first-row { margin-top: 16px; }
.name { font-size: 22.500px; color: #8f8f97; white-space: nowrap; }
.loud-panel .name { width: 98px; text-align: right; margin-right: 22px; flex: none; }
.seg { height: 48px; display: flex; border-radius: 11px; background: #2c2c37; color: #dedee2; font-size: 25.500px; letter-spacing: -0.300px; }
.seg span { flex: none; display: flex; align-items: center; justify-content: center; border-radius: 11px; white-space: nowrap; }
.seg .on { background: #3d7aff; color: #fff; }
.display-seg span:nth-child(1) { width: 132px; position: relative; }
.display-seg span:nth-child(1)::after { content: ''; position: absolute; right: 0; top: 10px; width: 2px; height: 28px; background: #3b3b46; }
.display-seg span:nth-child(2) { width: 207px; }
.display-seg span:nth-child(3) { width: 130px; }
.display-seg span:nth-child(4) { width: 131px; }
.pan-row { margin-top: 20px; }
.pan-seg { margin-left: 31px; }
.pan-seg span:nth-child(1) { width: 111px; }
.pan-seg span:nth-child(2) { width: 106px; }
.hint { margin: 10px 0 0 120px; font-size: 18px; line-height: 22px; color: #62626c; white-space: nowrap; letter-spacing: 0.220px; }
.extra-row { margin-top: 10px; }
.lbl { margin-left: 11px; font-size: 22.400px; white-space: nowrap; }
.bed-lbl { width: 151px; }
.hint.second { margin-top: 1px; }
.graph-row { margin-top: 19px; }
.time-lbl { width: 181px; }
.auto-seg span:nth-child(1) { width: 104px; }
.auto-seg span:nth-child(2) { width: 136px; }
.peak-row { margin-top: 14px; }
.peak-lbl { width: 215px; }
.ge { width: 33px; font-size: 20px; color: #7a7a84; }
.input.small { width: 96px; height: 36px; line-height: 36px; margin: 0 20px 0 0; padding-left: 12px; border-radius: 6px; font-size: 21px; }
.unit { font-size: 19.500px; color: #6b6b75; }
.layout-panel { height: 290.500px; }
.page-name { width: 63px; }
.page-seg span:nth-child(1) { width: 75px; }
.page-seg span:nth-child(2) { width: 157px; }
.orient-name { margin-left: 27px; width: 111px; overflow: hidden; }
.orient-seg span:nth-child(1) { width: 131px; }
.orient-seg span:nth-child(2) { width: 175.500px; }
.size-row { margin-top: 20px; }
.wave-name { width: 136px; }
.loud-name { margin-left: 42px; width: 120px; }
.size-seg span:nth-child(1) { width: 67px; }
.size-seg span:nth-child(2) { width: 63px; }
.size-seg span:nth-child(3) { width: 65px; }
.layout-panel hr { height: 2px; margin: 20px 0; border: 0; background: #24252f; }
.open-row { display: flex; align-items: center; }

.actions { height: 96px; flex: none; display: flex; align-items: center; padding: 0 37px 0 34px; border-top: 2px solid #181b23; }
.defaults { width: 130px; margin-right: auto; }
.cancel { width: 112px; }
.export { width: 203px; height: 48px; margin-left: 20px; border-radius: 11px; background: #3d7aff; color: #fff; font-size: 25px; letter-spacing: -0.200px; }
</style>
